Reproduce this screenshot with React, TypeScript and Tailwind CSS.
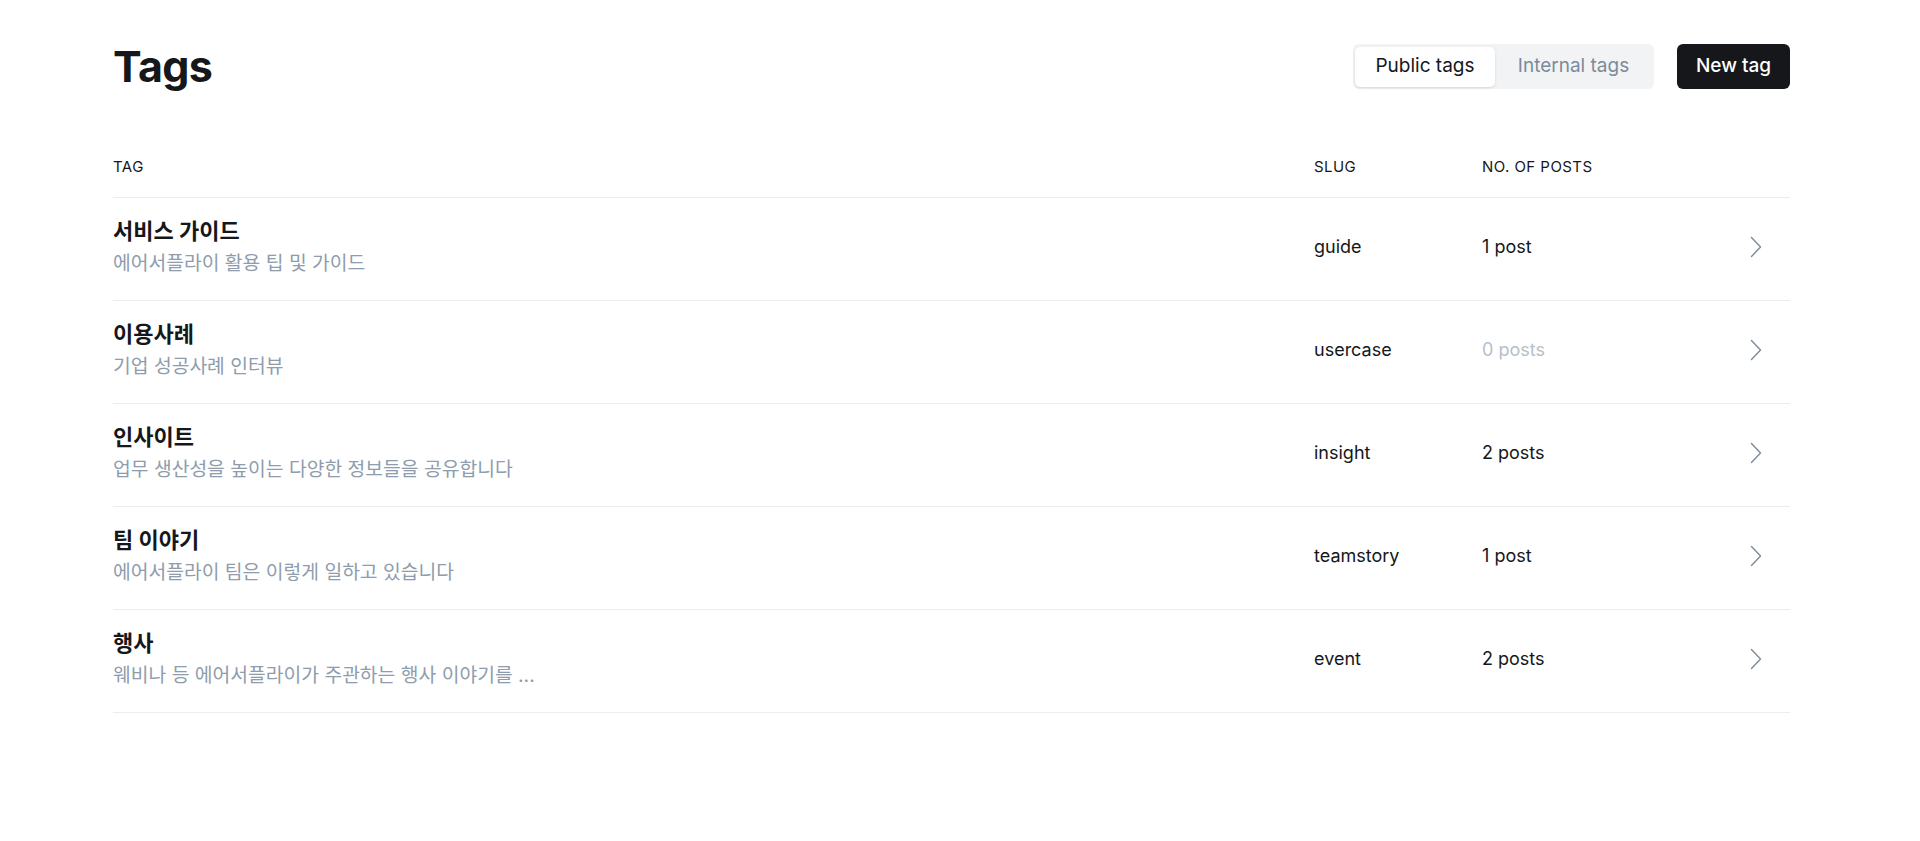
import React from "react";

type Tag = {
  name: string;
  description: string;
  slug: string;
  posts: number;
};

const tags: Tag[] = [
  { name: "서비스 가이드", description: "에어서플라이 활용 팁 및 가이드", slug: "guide", posts: 1 },
  { name: "이용사례", description: "기업 성공사례 인터뷰", slug: "usercase", posts: 0 },
  { name: "인사이트", description: "업무 생산성을 높이는 다양한 정보들을 공유합니다", slug: "insight", posts: 2 },
  { name: "팀 이야기", description: "에어서플라이 팀은 이렇게 일하고 있습니다", slug: "teamstory", posts: 1 },
  { name: "행사", description: "웨비나 등 에어서플라이가 주관하는 행사 이야기를 ...", slug: "event", posts: 2 },
];

const font = "font-['Inter','Noto_Sans_CJK_KR',sans-serif]";

const Chevron = () => (
  <svg width="12" height="22" viewBox="0 0 12 22" fill="none" className="text-[#7c8b9a]">
    <path d="M1.5 1.5 L10.5 11 L1.5 20.5" stroke="currentColor" strokeWidth="1.4" strokeLinecap="round" strokeLinejoin="round" />
  </svg>
);

const postsLabel = (n: number) => (n === 1 ? "1 post" : `${n} posts`);

export default function App() {
  return (
    <div className={`min-h-screen bg-white pl-[113px] pr-[130px] pt-[44px] text-[#15171a] ${font}`}>
      {/* Header */}
      <div className="flex items-center justify-between">
        <h1 className="text-[43px] font-bold leading-[45px] tracking-[-0.015em]">Tags</h1>
        <div className="flex items-center gap-[23px]">
          <div className="flex h-[45px] items-center rounded-md bg-[#f1f3f4] p-[2px]">
            <button className="h-[40px] w-[140px] rounded-[5px] bg-white text-[19px] text-[#15171a] shadow-[0_1px_3px_rgba(0,0,0,0.12)]">
              Public tags
            </button>
            <button className="h-[40px] w-[157px] text-[19px] text-[#7c8b9a]">Internal tags</button>
          </div>
          <button className="h-[45px] w-[113px] rounded-md bg-[#15171a] text-[19px] font-medium text-white">
            New tag
          </button>
        </div>
      </div>

      {/* Table */}
      <div className="mt-[68px]">
        <div className="grid grid-cols-[1201px_168px_238px_70px] border-b border-[#ebeef0] pb-[20px] text-[15px] font-normal uppercase leading-[20px] tracking-[0.03em]">
          <div>Tag</div>
          <div>Slug</div>
          <div>No. of posts</div>
          <div />
        </div>

        {tags.map((t) => (
          <div
            key={t.slug}
            className="grid grid-cols-[1201px_168px_238px_70px] items-center border-b border-[#ebeef0] pb-[24px] pt-[19px]"
          >
            <div>
              <div className="text-[22px] font-bold leading-[28px]">{t.name}</div>
              <div className="mt-[5px] text-[19.3px] leading-[26px] text-[#8e9cac]">{t.description}</div>
            </div>
            <div className="text-[18px]">{t.slug}</div>
            <div className={`text-[18px] ${t.posts === 0 ? "text-[#b7c0c9]" : ""}`}>{postsLabel(t.posts)}</div>
            <div className="flex justify-end pr-[28px]">
              <Chevron />
            </div>
          </div>
        ))}
      </div>
    </div>
  );
}
